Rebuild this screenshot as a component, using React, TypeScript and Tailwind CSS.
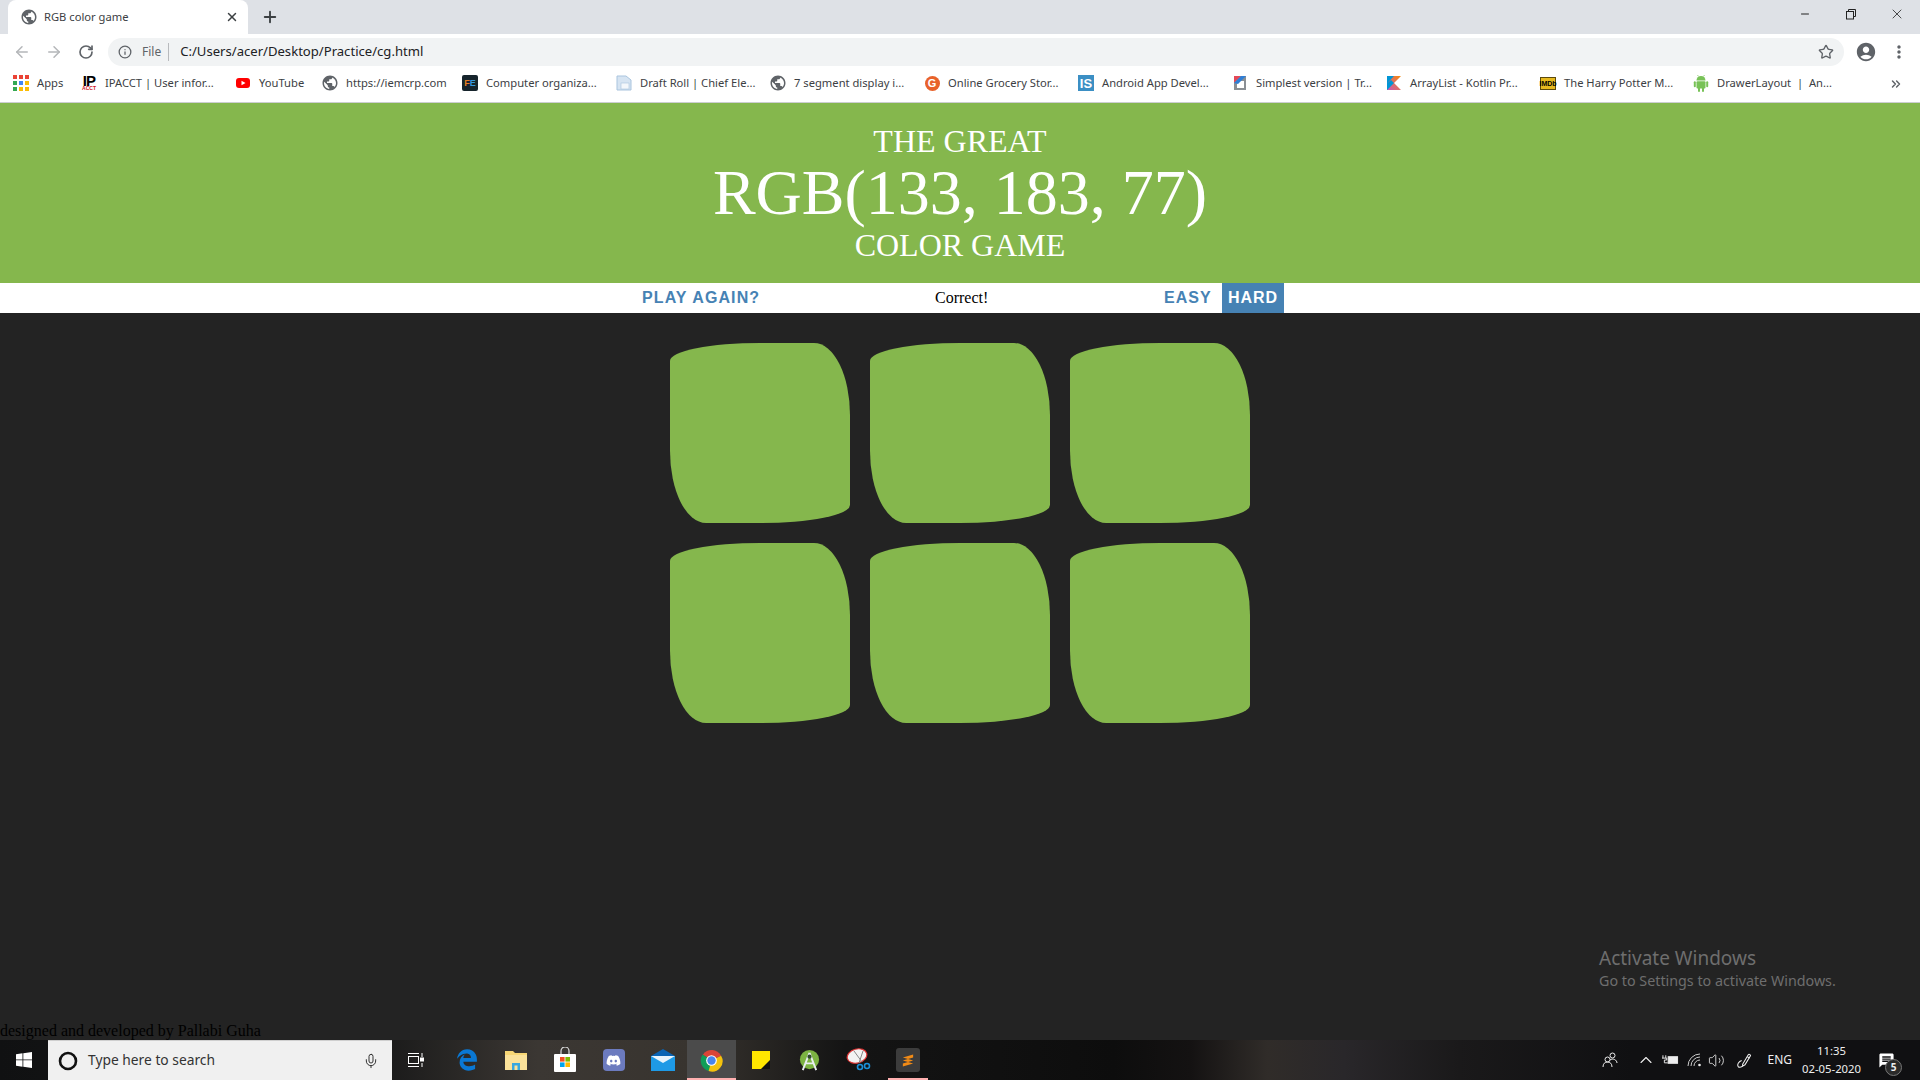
import React from "react";
import { ArrowLeft, ArrowRight, RotateCw, Info, Star, X, Plus, Minus, ChevronsRight, Mic, ChevronUp, Volume2 } from "lucide-react";
import { MdPublic, MdAccountCircle, MdMoreVert, MdMessage } from "react-icons/md";
import { FaEdgeLegacy, FaDiscord } from "react-icons/fa";

function Globe() {
  return <MdPublic className="w-[18px] h-[18px] text-[#5f6368] shrink-0" />;
}

function AppsIcon() {
  const colors = ["#ea4335", "#ea4335", "#ea4335", "#34a853", "#4285f4", "#fbbc05", "#34a853", "#fbbc05", "#fbbc05"];
  return (
    <div className="grid grid-cols-3 gap-[2px] w-[16px] h-[16px] shrink-0">
      {colors.map((c, i) => (
        <svg key={i} viewBox="0 0 4 4" className="w-[4px] h-[4px]">
          <rect width="4" height="4" fill={c} />
        </svg>
      ))}
    </div>
  );
}

function Bookmark({ icon, label, w }: { icon: React.ReactNode; label: string; w: string }) {
  return (
    <div className={`flex items-center gap-2 shrink-0 whitespace-pre ${w}`}>
      <div className="w-4 h-4 flex items-center justify-center shrink-0">{icon}</div>
      <span>{label}</span>
    </div>
  );
}

function Slot({ children, active, line }: { children: React.ReactNode; active?: boolean; line?: boolean }) {
  return (
    <div className={`relative w-[49px] h-full flex items-center justify-center ${active ? "bg-[#4b4b4b]" : ""}`}>
      {children}
      {line && <div className="absolute bottom-0 left-[5px] right-[4px] h-[2px] bg-[#ffb0b0]" />}
      {active && <div className="absolute bottom-0 left-0 right-0 h-[2px] bg-[#ffb0b0]" />}
    </div>
  );
}

function Square() {
  return <div className="w-[180px] h-[180px] bg-[#85b74d] rounded-[50%_20%_50%_20%/10%_40%_10%_40%]" />;
}

export default function App() {
  return (
    <div className="w-[1920px] h-[1080px] overflow-hidden flex flex-col font-['Liberation_Serif',serif] bg-[#232323]">
      {/* Tab strip */}
      <div className="h-[34px] bg-[#dee1e6] flex items-end shrink-0 font-['Noto_Sans',sans-serif] text-[#3c4043]">
        <div className="ml-2 w-[240px] h-[34px] bg-white rounded-t-lg flex items-center pl-3 pr-[9px]">
          <Globe />
          <span className="ml-[6px] text-[11.2px] flex-1">RGB color game</span>
          <X className="w-[14px] h-[14px] text-[#3c4043]" strokeWidth={2.5} />
        </div>
        <Plus className="w-[18px] h-[18px] ml-[13px] mb-2 text-[#3c4043]" strokeWidth={2.5} />
        <div className="ml-auto flex items-center self-start h-[28px] text-[#222]">
          <Minus className="w-[12px] h-[12px]" />
          <svg viewBox="0 0 12 12" className="w-[12px] h-[12px] ml-[34px]" fill="none" stroke="#222" strokeWidth="1">
            <rect x="1.5" y="3.5" width="7" height="7.5" />
            <path d="M3.5 3.5V1.5H10.5V8.5H8.5" />
          </svg>
          <X className="w-[16px] h-[16px] ml-[32px] mr-[15px]" strokeWidth={1.2} />
        </div>
      </div>

      {/* Toolbar */}
      <div className="h-[33px] bg-white flex items-center shrink-0 pt-[3px] font-['Noto_Sans',sans-serif]">
        <ArrowLeft className="w-[18px] h-[18px] ml-[13px] text-[#b4b6b9]" />
        <ArrowRight className="w-[18px] h-[18px] ml-[14px] text-[#b4b6b9]" />
        <RotateCw className="w-[16px] h-[16px] ml-[15px] text-[#5f6368]" strokeWidth={2.5} />
        <div className="ml-[14px] w-[1736px] h-[28px] bg-[#f1f3f4] rounded-full flex items-center pl-[10px]">
          <Info className="w-[14px] h-[14px] text-[#5f6368]" strokeWidth={2.2} />
          <span className="ml-[10px] text-xs text-[#5f6368]">File</span>
          <div className="ml-[7px] w-px h-[18px] bg-[#b8babd]" />
          <span className="ml-[11px] text-[13.1px] text-[#202124]">C:/Users/acer/Desktop/Practice/cg.html</span>
          <Star className="ml-auto mr-[10px] w-[16px] h-[16px] text-[#5f6368]" strokeWidth={2} />
        </div>
        <MdAccountCircle className="ml-[11px] w-[22px] h-[22px] text-[#5f6368]" />
        <MdMoreVert className="ml-[12px] w-[20px] h-[20px] text-[#5f6368]" />
      </div>

      {/* Bookmarks */}
      <div className="h-[33px] pb-[2px] bg-white border-b border-[#ccced1] flex items-center pl-[13px] shrink-0 text-[11.2px] text-[#3c4043] font-['Noto_Sans',sans-serif] box-content">
        <Bookmark w="w-[68px]" label="Apps" icon={<AppsIcon />} />
        <Bookmark
          w="w-[154px]"
          label="IPACCT | User infor..."
          icon={
            <div className="flex flex-col items-center font-['Liberation_Sans',sans-serif] font-bold">
              <span className="text-[15px] leading-[11px] text-black tracking-tighter">IP</span>
              <span className="text-[5px] leading-[5px] text-[#d0121b]">ACCT</span>
            </div>
          }
        />
        <Bookmark
          w="w-[87px]"
          label="YouTube"
          icon={
            <svg viewBox="0 0 16 16" className="w-4 h-4">
              <rect x="1" y="3" width="14" height="10" rx="3" fill="#f00" />
              <path d="M6.5 5.7 10.5 8 6.5 10.3Z" fill="#fff" />
            </svg>
          }
        />
        <Bookmark w="w-[140px]" label="https://iemcrp.com" icon={<Globe />} />
        <Bookmark
          w="w-[154px]"
          label="Computer organiza..."
          icon={
            <div className="w-4 h-4 bg-[#16242c] rounded-[2px] flex items-center justify-center text-[9px] font-bold leading-none font-['Liberation_Sans',sans-serif]">
              <span className="text-[#e67e22]">F</span>
              <span className="text-[#3498db]">E</span>
            </div>
          }
        />
        <Bookmark
          w="w-[154px]"
          label="Draft Roll | Chief Ele..."
          icon={
            <svg viewBox="0 0 16 16" className="w-4 h-4">
              <path d="M1 1H10L15 5V15H1Z" fill="#d6e4f2" stroke="#a9c4de" />
              <rect x="5" y="8" width="8" height="6" fill="#f3f7fb" stroke="#a9c4de" strokeWidth=".6" />
            </svg>
          }
        />
        <Bookmark w="w-[154px]" label="7 segment display i..." icon={<Globe />} />
        <Bookmark
          w="w-[154px]"
          label="Online Grocery Stor..."
          icon={
            <div className="w-[15px] h-[15px] rounded-full bg-[#e8622a] flex items-center justify-center text-white text-[11px] font-bold leading-none font-['Liberation_Sans',sans-serif]">
              G
            </div>
          }
        />
        <Bookmark
          w="w-[154px]"
          label="Android App Devel..."
          icon={
            <div className="w-4 h-4 bg-[#3b8fc4] flex items-center justify-center text-white text-[13px] font-bold leading-none font-['Liberation_Sans',sans-serif]">
              IS
            </div>
          }
        />
        <Bookmark
          w="w-[154px]"
          label="Simplest version | Tr..."
          icon={
            <svg viewBox="0 0 16 16" className="w-4 h-4">
              <rect x="2" y="1" width="12" height="14" fill="#8a8f94" />
              <rect x="5" y="6" width="7" height="7" fill="#fff" />
              <path d="M2 1H9L2 8Z" fill="#e44857" />
              <path d="M9 1H14L6 9 2 8Z" fill="#2f7fd6" />
            </svg>
          }
        />
        <Bookmark
          w="w-[154px]"
          label="ArrayList - Kotlin Pr..."
          icon={
            <svg viewBox="0 0 16 16" className="w-4 h-4">
              <defs>
                <linearGradient id="kot" x1="0" y1="1" x2="1" y2="0">
                  <stop offset="0" stopColor="#c757bc" />
                  <stop offset="1" stopColor="#f88909" />
                </linearGradient>
              </defs>
              <path d="M1 1H15L8 8 15 15H1Z" fill="url(#kot)" />
              <path d="M1 1H8L1 8.5ZM8 8 1 15V8.5L5 5Z" fill="#0095d5" />
            </svg>
          }
        />
        <Bookmark
          w="w-[153px]"
          label="The Harry Potter M..."
          icon={
            <div className="w-4 h-[13px] bg-[#e6b91e] border border-black/60 flex items-center justify-center text-black text-[7px] font-bold leading-none font-['Liberation_Sans',sans-serif]">
              IMDb
            </div>
          }
        />
        <Bookmark
          w="w-[190px]"
          label="DrawerLayout  |  An..."
          icon={
            <svg viewBox="0 0 16 18" className="w-4 h-[18px]" fill="#78c257">
              <path d="M3.5 6.5A4.5 4.5 0 0 1 12.5 6.5Z" />
              <path d="M5.5 2.5 4.5 1M10.5 2.5 11.5 1" stroke="#78c257" strokeWidth=".7" />
              <rect x="3.5" y="7.2" width="9" height="7.3" rx="1" />
              <rect x="0.8" y="7.2" width="2" height="6" rx="1" />
              <rect x="13.2" y="7.2" width="2" height="6" rx="1" />
              <rect x="5" y="13" width="2" height="5" rx="1" />
              <rect x="9" y="13" width="2" height="5" rx="1" />
            </svg>
          }
        />
        <ChevronsRight className="ml-[6px] w-[14px] h-[14px] text-[#5f6368]" strokeWidth={2.5} />
      </div>

      {/* Page */}
      <div className="flex-1 flex flex-col relative min-h-0">
        <h1 className="h-[180px] bg-[#85b74d] text-white text-center font-normal pt-[20px] shrink-0">
          <span className="block text-[32px] leading-[37px]">THE GREAT</span>
          <span className="block text-[64px] leading-[66px]">RGB(133, 183, 77)</span>
          <span className="block text-[32px] leading-[38px]">COLOR GAME</span>
        </h1>

        <div className="h-[30px] bg-white flex items-center justify-center shrink-0">
          <div className="ml-[6px] flex items-center h-full font-['Liberation_Sans',sans-serif] font-bold text-[16px] tracking-[1.1px] text-[#4682b4]">
            <button className="h-full w-[118px] text-left whitespace-nowrap">PLAY AGAIN?</button>
            <span className="ml-[175px] w-[229px] font-['Liberation_Serif',serif] font-normal tracking-normal text-black text-[16px]">Correct!</span>
            <button className="h-full w-[58px] text-left tracking-[1px]">EASY</button>
            <button className="h-full w-[62px] bg-[#4682b4] text-white text-center tracking-[1px]">HARD</button>
          </div>
        </div>

        <div className="w-[580px] mx-auto mt-[30px] grid grid-cols-3 gap-x-[20px] gap-y-[20px]">
          <Square />
          <Square />
          <Square />
          <Square />
          <Square />
          <Square />
        </div>

        <p className="mt-auto text-[16px] leading-[18px] text-black">designed and developed by Pallabi Guha</p>

        <div className="absolute left-[1599px] top-[843px] font-['Noto_Sans',sans-serif] text-[#6e6e6e]">
          <div className="text-[19px] leading-[25px]">Activate Windows</div>
          <div className="text-[14.3px] leading-[19px]">Go to Settings to activate Windows.</div>
        </div>
      </div>

      {/* Taskbar */}
      <div className="h-[40px] shrink-0 flex items-center text-white font-['Noto_Sans',sans-serif] bg-[linear-gradient(90deg,#101112_0%,#1a1a1a_20%,#3b3733_28%,#38342f_36%,#141414_44%,#0d0d0d_58%,#141212_62%,#302c29_66%,#29272a_70%,#1a191a_76%,#101012_85%,#101012_100%)]">
        <div className="w-[48px] h-full flex items-center justify-center">
          <svg viewBox="0 0 16 16" className="w-[16px] h-[16px]" fill="#fff">
            <path d="M0 2.2 6.5 1.3V7.5H0ZM7.3 1.2 16 0V7.5H7.3ZM0 8.3H6.5V14.7L0 13.8ZM7.3 8.3H16V16L7.3 14.8Z" />
          </svg>
        </div>
        <div className="w-[344px] h-full bg-[#f0f0f0] border-t border-[#cfcfcf] flex items-center pl-[10px] text-[#222]">
          <svg viewBox="0 0 20 20" className="w-[20px] h-[20px]">
            <circle cx="10" cy="10" r="8" fill="none" stroke="#111" strokeWidth="2.6" />
          </svg>
          <span className="ml-[10px] text-[13.8px] text-[#333]">Type here to search</span>
          <Mic className="ml-auto mr-[13px] w-[16px] h-[16px] text-[#333]" strokeWidth={1.5} />
        </div>
        <div className="w-[50px] h-full flex items-center justify-center pr-[3px]">
          <svg viewBox="0 0 17 16" className="w-[17px] h-[16px]" fill="none" stroke="#fff" strokeWidth="1">
            <path d="M1 1.5H12M1 14.5H12" />
            <rect x="1.5" y="4.5" width="10" height="7" />
            <path d="M15 1V5M15 11V15" />
            <rect x="13.5" y="6" width="3" height="3" fill="#fff" />
          </svg>
        </div>
        <Slot>
          <FaEdgeLegacy className="w-[22px] h-[22px] text-[#0a78d4]" />
        </Slot>
        <Slot>
          <svg viewBox="0 0 24 22" className="w-[24px] h-[22px]">
            <path d="M1 2H9L11 4H23V20H1Z" fill="#f8d775" />
            <path d="M1 6H23V21H1Z" fill="#fbe29a" />
            <path d="M8 21V14H16V21H13.5V16.5H10.5V21Z" fill="#38a8e0" />
          </svg>
        </Slot>
        <Slot>
          <svg viewBox="0 0 24 26" className="w-[24px] h-[26px]">
            <path d="M8 8V4A4 4 0 0 1 16 4V8" fill="none" stroke="#ddd" strokeWidth="1.2" />
            <rect x="1" y="7" width="22" height="18" rx="1" fill="#fff" />
            <rect x="7" y="10" width="4.6" height="4.6" fill="#f25022" />
            <rect x="12.4" y="10" width="4.6" height="4.6" fill="#7fba00" />
            <rect x="7" y="15.4" width="4.6" height="4.6" fill="#00a4ef" />
            <rect x="12.4" y="15.4" width="4.6" height="4.6" fill="#ffb900" />
          </svg>
        </Slot>
        <Slot>
          <div className="w-[22px] h-[22px] rounded-[4px] bg-[#6c7bbf] flex items-center justify-center">
            <FaDiscord className="w-[15px] h-[15px] text-white" />
          </div>
        </Slot>
        <Slot>
          <svg viewBox="0 0 24 22" className="w-[24px] h-[22px]">
            <path d="M0 7 12 0 24 7V22H0Z" fill="#0a64b4" />
            <path d="M0 7H24V22H0Z" fill="#1e9ae6" />
            <path d="M0 7H24L12 14Z" fill="#e8f4fc" />
          </svg>
        </Slot>
        <Slot active>
          <svg viewBox="0 0 24 24" className="w-[23px] h-[23px]">
            <path d="M12 12 3 6A11 11 0 0 1 22 7Z" fill="#db4437" />
            <path d="M12 12 2.8 5.8A11 11 0 0 0 10 23Z" fill="#0f9d58" />
            <path d="M12 12 22 7A11 11 0 0 1 9 23Z" fill="#f4c20d" />
            <circle cx="12" cy="12" r="5.6" fill="#fff" />
            <circle cx="12" cy="12" r="4.4" fill="#4a85ed" />
          </svg>
        </Slot>
        <Slot>
          <svg viewBox="0 0 18 18" className="w-[18px] h-[18px]">
            <rect width="18" height="18" fill="#ffe600" />
            <path d="M9 18 18 9V18Z" fill="#111" />
          </svg>
        </Slot>
        <Slot>
          <svg viewBox="0 0 24 24" className="w-[23px] h-[23px]">
            <circle cx="12" cy="11" r="10" fill="#7cb342" />
            <path d="M12 4 5 22M12 4 19 22M8 15H16" fill="none" stroke="#e8eef0" strokeWidth="2" />
            <circle cx="12" cy="8" r="2.2" fill="#2f4a2a" />
          </svg>
        </Slot>
        <Slot>
          <svg viewBox="0 0 26 24" className="w-[26px] h-[24px]">
            <ellipse cx="11" cy="8" rx="10" ry="7" fill="#f2f2f2" stroke="#d33" strokeWidth="1.2" transform="rotate(-15 11 8)" />
            <path d="M8 3 16 14M17 3 13 15" stroke="#888" strokeWidth="1" />
            <circle cx="14" cy="19" r="2.5" fill="none" stroke="#1b8fd8" strokeWidth="1.6" />
            <circle cx="21" cy="18" r="2.5" fill="none" stroke="#1b8fd8" strokeWidth="1.6" />
          </svg>
        </Slot>
        <Slot line>
          <div className="w-[24px] h-[24px] rounded-[3px] bg-[#3c3c3c] flex items-center justify-center">
            <svg viewBox="0 0 14 16" className="w-[12px] h-[15px]">
              <path d="M13 1V4.5L1 8V4.5ZM1 8 13 11.5V8L1 4.5ZM13 8V11.5L1 15V11.5Z" fill="#f28b16" />
            </svg>
          </div>
        </Slot>

        {/* Tray */}
        <div className="ml-auto flex items-center h-full text-[#eee]">
          <svg viewBox="0 0 16 16" className="w-[16px] h-[16px]" fill="none" stroke="#eee" strokeWidth="1">
            <circle cx="10.5" cy="3.5" r="2.5" />
            <path d="M8 8C11 5.8 15 8 15 11" />
            <circle cx="5.5" cy="7.5" r="2.5" />
            <path d="M1 15C1 11.5 3 10 5.5 10S10 11.5 10 15" />
          </svg>
          <ChevronUp className="ml-[18px] w-[20px] h-[20px]" strokeWidth={1.3} />
          <svg viewBox="0 0 18 12" className="ml-[6px] w-[17px] h-[12px]" fill="none" stroke="#eee" strokeWidth="1">
            <path d="M1 1V4M4 1V4M0 4H5V6H2.5V9H6" />
            <rect x="6.5" y="2.5" width="10" height="7" fill="#eee" />
          </svg>
          <svg viewBox="0 0 16 14" className="ml-[8px] w-[16px] h-[14px]" fill="none" stroke="#ccc" strokeWidth="1">
            <path d="M1 13A12 12 0 0 1 13 1M4 13A9 9 0 0 1 13 4M7 13A6 6 0 0 1 13 7" />
            <circle cx="12.5" cy="12" r="1.3" fill="#eee" stroke="none" />
          </svg>
          <Volume2 className="ml-[5px] w-[17px] h-[17px]" strokeWidth={1.2} />
          <svg viewBox="0 0 18 18" className="ml-[11px] w-[17px] h-[17px]" fill="none" stroke="#eee" strokeWidth="1.1">
            <path d="M7 13 13 3C13.6 2 15.4 2.6 15.4 3.8L9.5 13.5 7 15Z" />
            <path d="M12 5 14.5 6.5" />
            <path d="M6 9C3 10 1 13 2.2 15.2 3.4 17 5.5 16 7 15" />
          </svg>
          <span className="ml-[14px] text-[12px]">ENG</span>
          <div className="ml-[10px] flex flex-col items-center text-[11.3px] leading-[18px]">
            <span>11:35</span>
            <span>02-05-2020</span>
          </div>
          <div className="relative ml-[17px] mr-[25px] w-[17px] h-[17px]">
            <MdMessage className="w-[17px] h-[17px] text-white" />
            <div className="absolute left-[7px] top-[7px] w-[17px] h-[17px] rounded-full bg-[#2a2a2a] border border-[#777] flex items-center justify-center text-[10px] font-bold leading-none">
              5
            </div>
          </div>
        </div>
      </div>
    </div>
  );
}
